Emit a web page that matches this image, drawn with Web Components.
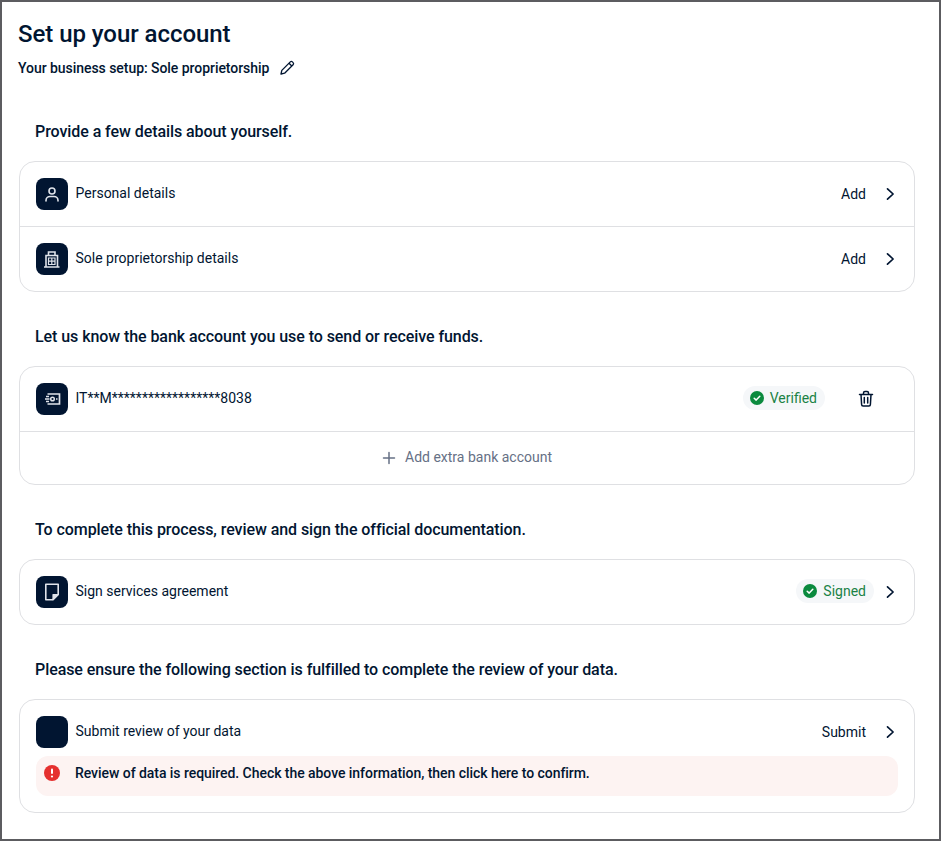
<!DOCTYPE html>
<html lang="en">
<head>
<meta charset="utf-8">
<title>Set up your account</title>
<style>
  html, body { margin: 0; background: #fff; }
  body { font-family: Roboto, "Liberation Sans", sans-serif; color: #011531; }
</style>
</head>
<body>
<account-page>
  <setup-section heading="Provide a few details about yourself.">
    <setup-row icon="person" label="Personal details"><span slot="action">Add</span><row-chevron slot="end"></row-chevron></setup-row>
    <setup-row icon="building" label="Sole proprietorship details" divided><span slot="action">Add</span><row-chevron slot="end"></row-chevron></setup-row>
  </setup-section>
  <setup-section heading="Let us know the bank account you use to send or receive funds.">
    <setup-row icon="bank" label="IT**M******************8038"><status-pill slot="action">Verified</status-pill><trash-button slot="end"></trash-button></setup-row>
    <add-row>Add extra bank account</add-row>
  </setup-section>
  <setup-section heading="To complete this process, review and sign the official documentation.">
    <setup-row icon="doc" label="Sign services agreement"><status-pill slot="action" tight>Signed</status-pill><row-chevron slot="end"></row-chevron></setup-row>
  </setup-section>
  <setup-section heading="Please ensure the following section is fulfilled to complete the review of your data.">
    <setup-row icon="none" label="Submit review of your data" compact><span slot="action">Submit</span><row-chevron slot="end"></row-chevron></setup-row>
    <error-note>Review of data is required. Check the above information, then click here to confirm.</error-note>
  </setup-section>
</account-page>

<script>
const ICONS = {
  person: `<circle cx="12" cy="9" r="3"/><path d="M6 19v-.6c0-2.300 1.800-3.900 4-3.900h4c2.200 0 4 1.600 4 3.900v.6"/>`,
  building: `<path d="M6 20V8.500h11.500V20M8.500 8.500V5h6.500v3.500M4 20h15.500" stroke-width="1.600" stroke-linecap="butt"/><path d="M8.500 11h6.500v6.500H8.500zM11.800 11v6.500M8.500 14.200h6.500" stroke-width="1.200" stroke-linecap="butt"/>`,
  bank: `<path d="M7.500 7h12v10h-12" stroke-width="1.700" stroke-linecap="butt"/><circle cx="12.500" cy="12" r="1.800" stroke-width="1.500"/><path d="M5 12h4.500M16 12h1.500M6 9.500h3M6 14.500h3" stroke-width="1.400" stroke-linecap="butt"/>`,
  doc: `<path d="M5.800 4.300h12.400v10.200l-5.200 5.200H5.800z" stroke-width="1.600" stroke-linejoin="round"/><path d="M13 19.500v-5h5.200z" fill="#dfe3ea" stroke-width="1.200" stroke-linejoin="round"/>`,
  none: ``
};

class AccountPage extends HTMLElement {
  constructor() {
    super();
    const shadowRoot = this.attachShadow({ mode: "open" });
    shadowRoot.innerHTML = `
      <style>
        :host {
          display: block;
          box-sizing: border-box;
          width: 941px;
          height: 841px;
          padding: 18px 24px 0 17px;
          border: 2px solid #5c5c60;
          overflow: hidden;
          font-family: Roboto, "Liberation Sans", sans-serif;
          color: #011531;
        }
        h1 {
          margin: 0 0 0 -1px;
          font-size: 24px;
          line-height: 28px;
          font-weight: 500;
          letter-spacing: -0.05px;
        }
        .biz {
          display: flex;
          align-items: center;
          height: 20px;
          margin: 10px 0 9px -1px;
          font-size: 14px;
          font-weight: 500;
          letter-spacing: -0.05px;
        }
        .biz svg {
          margin-left: 9px;
        }
      </style>
      <h1>Set up your account</h1>
      <div class="biz">Your business setup: Sole proprietorship
        <svg width="18" height="18" viewBox="0 0 18 18" fill="none" stroke="#011531" stroke-width="1.300" stroke-linejoin="round">
          <path d="M3 15l.8-3.600L12.300 2.900a1.500 1.500 0 0 1 2.100 0l.7.7a1.500 1.500 0 0 1 0 2.100L6.600 14.200z"/>
          <path d="M11 4.200l2.800 2.800"/>
        </svg>
      </div>
      <slot></slot>
    `;
  }
}

class SetupSection extends HTMLElement {
  constructor() {
    super();
    const shadowRoot = this.attachShadow({ mode: "open" });
    shadowRoot.innerHTML = `
      <style>
        :host {
          display: block;
          padding-top: 33px;
        }
        h2 {
          margin: 0 0 17px 16px;
          font-size: 16px;
          line-height: 24px;
          font-weight: 500;
          letter-spacing: -0.07px;
        }
        .card {
          border: 1px solid #dfe0e3;
          border-radius: 16px;
          background: #fff;
        }
      </style>
      <h2></h2>
      <div class="card"><slot></slot></div>
    `;
    this._titleEl = shadowRoot.querySelector("h2");
  }

  connectedCallback() {
    this._titleEl.textContent = this.getAttribute("heading");
  }
}

class SetupRow extends HTMLElement {
  constructor() {
    super();
    const shadowRoot = this.attachShadow({ mode: "open" });
    shadowRoot.innerHTML = `
      <style>
        :host {
          display: flex;
          align-items: center;
          box-sizing: border-box;
          height: 64px;
          padding: 0 16px;
          font-size: 14px;
          color: #011531;
        }
        :host([divided]) {
          height: 65px;
          border-top: 1px solid #dfe0e3;
        }
        :host([compact]) {
          height: 56px;
          padding-top: 8px;
        }
        .tile {
          flex: none;
          width: 32px;
          height: 32px;
          border-radius: 8px;
          background: #011531;
          display: flex;
          align-items: center;
          justify-content: center;
        }
        .label {
          flex: 1;
          margin: -2px 0 0 7.500px;
        }
        .action {
          margin-right: 16px;
          line-height: 20px;
        }
      </style>
      <div class="tile"><svg width="24" height="24" viewBox="0 0 24 24" fill="none" stroke="#dfe3ea" stroke-width="1.600" stroke-linecap="round"></svg></div>
      <div class="label"></div>
      <div class="action"><slot name="action"></slot></div>
      <slot name="end"></slot>
    `;
    this._svg = shadowRoot.querySelector("svg");
    this._labelEl = shadowRoot.querySelector(".label");
  }

  connectedCallback() {
    this._svg.innerHTML = ICONS[this.getAttribute("icon")] || "";
    this._labelEl.textContent = this.getAttribute("label");
  }
}

class RowChevron extends HTMLElement {
  constructor() {
    super();
    const shadowRoot = this.attachShadow({ mode: "open" });
    shadowRoot.innerHTML = `
      <style>
        :host { display: block; width: 16px; height: 16px; }
        svg { display: block; }
      </style>
      <svg width="16" height="16" viewBox="0 0 16 16" fill="none" stroke="#011531" stroke-width="1.700" stroke-linecap="round" stroke-linejoin="round">
        <path d="M5.500 2.800l5.600 5.200-5.600 5.200"/>
      </svg>
    `;
  }
}

class TrashButton extends HTMLElement {
  constructor() {
    super();
    const shadowRoot = this.attachShadow({ mode: "open" });
    shadowRoot.innerHTML = `
      <style>
        :host { display: block; width: 16px; height: 18px; margin: 0 24px 0 17px; }
        svg { display: block; }
      </style>
      <svg width="16" height="18" viewBox="0 0 16 18" fill="none" stroke="#011531" stroke-width="1.500" stroke-linecap="round" stroke-linejoin="round">
        <path d="M1.500 4.500h13M5.500 4.500V3a1.500 1.500 0 0 1 1.500-1.500h2A1.500 1.500 0 0 1 10.500 3v1.500M3 4.500l.6 10a1.500 1.500 0 0 0 1.500 1.500h5.800a1.500 1.500 0 0 0 1.500-1.500l.6-10M6.300 7.500v5.500M9.700 7.500v5.500"/>
      </svg>
    `;
  }
}

class StatusPill extends HTMLElement {
  constructor() {
    super();
    const shadowRoot = this.attachShadow({ mode: "open" });
    shadowRoot.innerHTML = `
      <style>
        :host {
          display: inline-flex;
          align-items: center;
          gap: 6px;
          height: 24px;
          padding: 0 8px 0 7px;
          margin-top: -2px;
          border-radius: 12px;
          background: #f5f7f9;
          color: #1a8245;
          font-size: 14px;
          vertical-align: middle;
        }
        :host([tight]) {
          margin-right: -8px;
        }
        svg { display: block; flex: none; }
      </style>
      <svg width="14" height="14" viewBox="0 0 14 14">
        <circle cx="7" cy="7" r="7" fill="#0b8a3e"/>
        <path d="M4.200 7.200l2 1.900 3.600-3.800" fill="none" stroke="#fff" stroke-width="1.500" stroke-linecap="round" stroke-linejoin="round"/>
      </svg>
      <slot></slot>
    `;
  }
}

class AddRow extends HTMLElement {
  constructor() {
    super();
    const shadowRoot = this.attachShadow({ mode: "open" });
    shadowRoot.innerHTML = `
      <style>
        :host {
          display: flex;
          align-items: center;
          justify-content: center;
          gap: 9px;
          height: 53px;
          box-sizing: border-box;
          padding-bottom: 2px;
          border-top: 1px solid #dfe0e3;
          color: #667085;
          font-size: 14px;
        }
        svg { display: block; margin-top: 2px; }
      </style>
      <svg width="14" height="14" viewBox="0 0 14 14" fill="none" stroke="#667085" stroke-width="1.500" stroke-linecap="round">
        <path d="M7 1.500v11M1.500 7h11"/>
      </svg>
      <slot></slot>
    `;
  }
}

class ErrorNote extends HTMLElement {
  constructor() {
    super();
    const shadowRoot = this.attachShadow({ mode: "open" });
    shadowRoot.innerHTML = `
      <style>
        :host {
          display: flex;
          align-items: center;
          gap: 15px;
          box-sizing: border-box;
          height: 40px;
          margin: 0 16px 16px;
          padding: 0 8px 6px;
          border-radius: 12px;
          background: #fdf3f2;
          font-size: 14px;
          font-weight: 500;
          letter-spacing: -0.05px;
          color: #011531;
        }
        svg { display: block; flex: none; }
      </style>
      <svg width="16" height="16" viewBox="0 0 16 16">
        <circle cx="8" cy="8" r="8" fill="#e5302f"/>
        <rect x="7" y="3.500" width="2" height="5.500" rx="1" fill="#fff"/>
        <circle cx="8" cy="11.500" r="1.100" fill="#fff"/>
      </svg>
      <slot></slot>
    `;
  }
}

window.customElements.define("account-page", AccountPage);
window.customElements.define("setup-section", SetupSection);
window.customElements.define("setup-row", SetupRow);
window.customElements.define("row-chevron", RowChevron);
window.customElements.define("trash-button", TrashButton);
window.customElements.define("status-pill", StatusPill);
window.customElements.define("add-row", AddRow);
window.customElements.define("error-note", ErrorNote);
</script>
</body>
</html>
